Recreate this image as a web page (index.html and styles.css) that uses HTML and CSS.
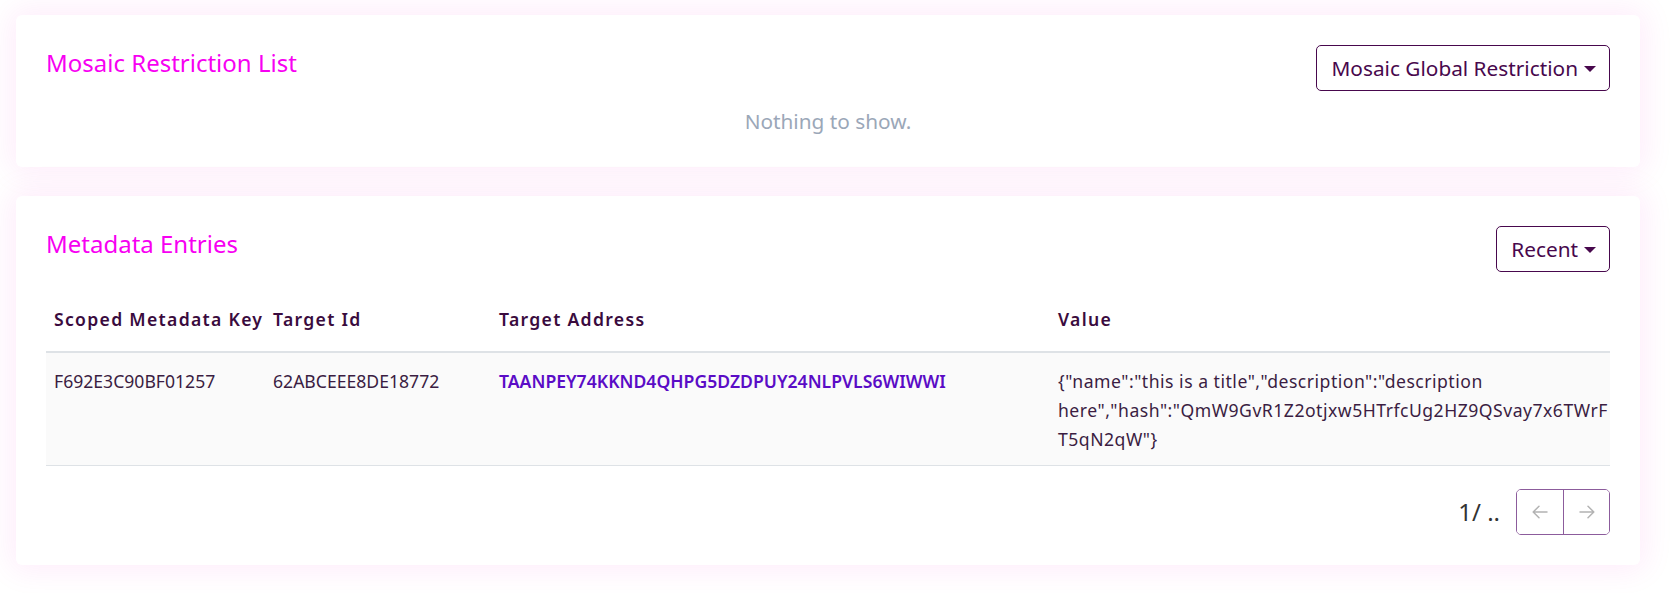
FILE: index.html
```html
<!DOCTYPE html>
<html lang="en">
<head>
<meta charset="utf-8">
<title>Mosaic</title>
<link rel="stylesheet" href="styles.css">
</head>
<body>
<main class="page">
  <section class="card">
    <div class="card-head">
      <h2 class="card-title">Mosaic Restriction List</h2>
      <button class="dropdown">Mosaic Global Restriction<span class="caret"></span></button>
    </div>
    <p class="empty">Nothing to show.</p>
  </section>

  <section class="card">
    <div class="card-head">
      <h2 class="card-title">Metadata Entries</h2>
      <button class="dropdown">Recent<span class="caret"></span></button>
    </div>
    <table class="table">
      <colgroup>
        <col class="c1"><col class="c2"><col class="c3"><col class="c4">
      </colgroup>
      <thead>
        <tr>
          <th>Scoped Metadata Key</th>
          <th>Target Id</th>
          <th>Target Address</th>
          <th>Value</th>
        </tr>
      </thead>
      <tbody>
        <tr>
          <td>F692E3C90BF01257</td>
          <td>62ABCEEE8DE18772</td>
          <td><a class="addr" href="#">TAANPEY74KKND4QHPG5DZDPUY24NLPVLS6WIWWI</a></td>
          <td class="value">{"name":"this is a title","description":"description here","hash":"QmW9GvR1Z2otjxw5HTrfcUg2HZ9QSvay7x6TWrFT5qN2qW"}</td>
        </tr>
      </tbody>
    </table>
    <div class="pager">
      <span class="pager-text">1/ ..</span>
      <div class="pager-btns">
        <button class="pbtn" aria-label="Previous">
          <svg width="16" height="14" viewBox="0 0 16 14" fill="none" stroke="#b3b3b3" stroke-width="1.5" stroke-linecap="round" stroke-linejoin="round"><path d="M15 7H1.5M7 1.2L1.2 7 7 12.8"/></svg>
        </button>
        <button class="pbtn" aria-label="Next">
          <svg width="16" height="14" viewBox="0 0 16 14" fill="none" stroke="#b3b3b3" stroke-width="1.5" stroke-linecap="round" stroke-linejoin="round"><path d="M1 7h13.5M9 1.2L14.8 7 9 12.8"/></svg>
        </button>
      </div>
    </div>
  </section>
</main>
</body>
</html>
```
FILE: styles.css
```css
* { box-sizing: border-box; }
html, body { margin: 0; padding: 0; background: #fff; }
body {
  font-family: "Noto Sans", "Open Sans", "DejaVu Sans", sans-serif;
  color: #3b1d42;
}
.page {
  padding: 15px 39px 28px 16px;
  display: flex;
  flex-direction: column;
  gap: 29px;
}
.card {
  background: #fff;
  border-radius: 6px;
  padding: 30px;
  box-shadow: 0 0 30px 6px rgba(235, 0, 205, 0.075);
}
.card-head {
  display: flex;
  justify-content: space-between;
  align-items: flex-start;
}
.card-title {
  margin: 0;
  font-size: 24px;
  line-height: 36px;
  font-weight: 400;
  color: #f700f2;
}
.dropdown {
  font-family: inherit;
  font-size: 20.8px;
  line-height: 30px;
  height: 46px;
  padding: 0 13px 0 14px;
  background: #fff;
  color: #48084d;
  border: 1px solid #48084d;
  border-radius: 5px;
  display: flex;
  align-items: center;
}
.caret {
  display: inline-block;
  margin-left: 6px;
  border-top: 6px solid #48084d;
  border-left: 6px solid transparent;
  border-right: 6px solid transparent;
  margin-top: 1px;
}
.empty {
  margin: 15px 0 0;
  text-align: center;
  font-size: 20.8px;
  line-height: 31px;
  color: #9ba7b8;
}
.table {
  width: 100%;
  margin-top: 23px;
  border-collapse: collapse;
  table-layout: fixed;
  font-size: 17.6px;
}
.c1 { width: 219px; }
.c2 { width: 226px; }
.c3 { width: 559px; }
.c4 { width: 560px; }
.table th {
  text-align: left;
  font-weight: 600;
  letter-spacing: 1.3px;
  color: #3a0b3e;
  padding: 10px 8px 18px;
  line-height: 28px;
  border-bottom: 2px solid #dee2e6;
  white-space: nowrap;
  vertical-align: bottom;
}
.table td {
  background: #fafafa;
  padding: 14px 8px 11px;
  line-height: 29px;
  vertical-align: top;
  border-bottom: 1px solid #dee2e6;
  color: #3b1d42;
}
.addr {
  color: #5a0cc6;
  font-weight: 600;
  text-decoration: none;
}
.table td.value {
  letter-spacing: 0.5px;
  padding-right: 0;
  overflow-wrap: anywhere;
}
.pager {
  margin-top: 23px;
  display: flex;
  justify-content: flex-end;
  align-items: center;
  gap: 16px;
}
.pager-text {
  font-size: 24px;
  line-height: 32px;
  color: #333;
}
.pager-btns {
  display: flex;
  border: 1px solid #8c5c9c;
  border-radius: 5px;
  overflow: hidden;
}
.pbtn {
  width: 46px;
  height: 44px;
  background: #fff;
  border: 0;
  padding: 0;
  display: flex;
  align-items: center;
  justify-content: center;
}
.pbtn + .pbtn { border-left: 1px solid #8c5c9c; }
```
